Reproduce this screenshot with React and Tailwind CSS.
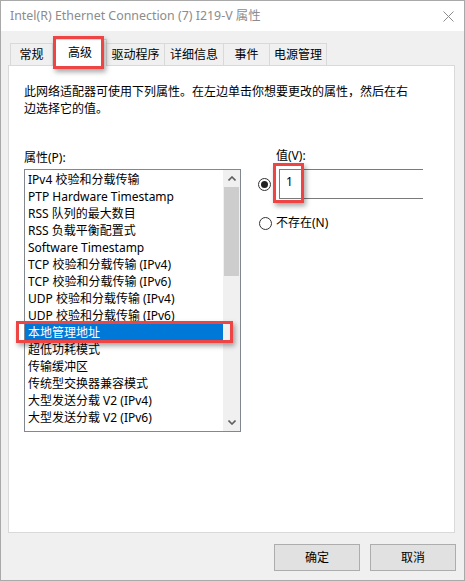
import React from "react";

const font = {
  fontFamily: '"Segoe UI", "Noto Sans", "Noto Sans CJK SC", sans-serif',
};

const tabs = [
  { label: "常规", w: "w-[43px]" },
  { label: "高级", w: "w-[54px]", active: true },
  { label: "驱动程序", w: "w-[59px]" },
  { label: "详细信息", w: "w-[60px]" },
  { label: "事件", w: "w-[47px]" },
  { label: "电源管理", w: "w-[58px]" },
];

const items = [
  "IPv4 校验和分载传输",
  "PTP Hardware Timestamp",
  "RSS 队列的最大数目",
  "RSS 负载平衡配置式",
  "Software Timestamp",
  "TCP 校验和分载传输 (IPv4)",
  "TCP 校验和分载传输 (IPv6)",
  "UDP 校验和分载传输 (IPv4)",
  "UDP 校验和分载传输 (IPv6)",
  "本地管理地址",
  "超低功耗模式",
  "传输缓冲区",
  "传统型交换器兼容模式",
  "大型发送分载 V2 (IPv4)",
  "大型发送分载 V2 (IPv6)",
];

const Radio = ({ checked }) => (
  <div className="w-[13px] h-[13px] rounded-full border border-[#333] bg-white flex items-center justify-center">
    {checked && <div className="w-[7px] h-[7px] rounded-full bg-[#222]" />}
  </div>
);

const RedBox = ({ className }) => (
  <div
    className={`absolute border-[3px] border-[#ee4444] shadow-[2px_3px_5px_rgba(0,0,0,0.35)] pointer-events-none ${className}`}
  />
);

export default function App() {
  return (
    <div
      className="relative w-[465px] h-[581px] border border-[#a9a9a9] bg-[#f0f0f0] flex flex-col text-[12px] text-black"
      style={font}
    >
      {/* Title bar */}
      <div className="h-[30px] bg-white flex items-center justify-between pl-[9px] pr-[9px]">
        <span className="text-[12.4px] text-[#8c8c8c]">
          Intel(R) Ethernet Connection (7) I219-V 属性
        </span>
        <svg width="11" height="11" viewBox="0 0 11 11" className="mr-[1px]">
          <path d="M0.5 0.5 L10.5 10.5 M10.5 0.5 L0.5 10.5" stroke="#8c8c8c" strokeWidth="1" />
        </svg>
      </div>

      {/* Tabs */}
      <div className="mt-[7px] pl-[9px] flex items-end h-[27px] relative z-10">
        {tabs.map((t) =>
          t.active ? (
            <div
              key={t.label}
              className={`${t.w} h-[27px] -mb-[1px] bg-white border border-b-0 border-[#d9d9d9] flex items-start justify-center pt-[4px]`}
            >
              {t.label}
            </div>
          ) : (
            <div
              key={t.label}
              className={`${t.w} h-[22px] bg-[#f0f0f0] border border-b-0 border-[#d9d9d9] -ml-[1px] first:ml-0 flex items-center justify-center`}
            >
              {t.label}
            </div>
          )
        )}
      </div>

      {/* Tab panel */}
      <div className="ml-[7px] w-[447px] h-[468px] bg-white border border-[#d9d9d9] px-[15px] pt-[17px]">
        <p className="leading-[17px]">
          此网络适配器可使用下列属性。在左边单击你想要更改的属性，然后在右
          <br />
          边选择它的值。
        </p>

        <div className="mt-[32px] flex">
          {/* Left column */}
          <div className="w-[217px]">
            <div className="leading-[17px] mb-[3px]">属性(P):</div>
            <div className="h-[263px] border border-[#828790] flex">
              <div className="flex-1 pt-[1px]">
                {items.map((it) => {
                  const sel = it === "本地管理地址";
                  return (
                    <div
                      key={it}
                      className={`h-[17px] leading-[17px] pl-[3px] whitespace-nowrap ${
                        sel ? "bg-[#0078d7] text-white" : ""
                      }`}
                    >
                      {it}
                    </div>
                  );
                })}
              </div>
              <div className="w-[17px] bg-[#f0f0f0] flex flex-col">
                <div className="h-[17px] flex items-center justify-center">
                  <svg width="8" height="5" viewBox="0 0 8 5">
                    <path d="M0.5 4.5 L4 1 L7.5 4.5" stroke="#606060" strokeWidth="1.6" fill="none" />
                  </svg>
                </div>
                <div className="mx-[1px] h-[89px] bg-[#cdcdcd]" />
                <div className="flex-1" />
                <div className="h-[17px] flex items-center justify-center">
                  <svg width="8" height="5" viewBox="0 0 8 5">
                    <path d="M0.5 0.5 L4 4 L7.5 0.5" stroke="#606060" strokeWidth="1.6" fill="none" />
                  </svg>
                </div>
              </div>
            </div>
          </div>

          {/* Right column */}
          <div className="ml-[17px] flex-1">
            <div className="ml-[18px] leading-[17px] mb-[5px] -mt-[2px]">值(V):</div>
            <div className="flex items-center">
              <Radio checked />
              <div className="ml-[8px] w-[144px] h-[30px] border-t border-l border-b border-[#7a7a7a] pl-[6px] pt-[3px] leading-[17px]">
                1
              </div>
            </div>
            <div className="flex items-center mt-[15px] ml-[1px]">
              <Radio />
              <span className="ml-[4px]">不存在(N)</span>
            </div>
          </div>
        </div>
      </div>

      {/* Buttons */}
      <div className="flex justify-end gap-[10px] pr-[8px] mt-[11px]">
        <button className="w-[86px] h-[27px] bg-[#e1e1e1] border border-[#adadad]">确定</button>
        <button className="w-[86px] h-[27px] bg-[#e1e1e1] border border-[#adadad]">取消</button>
      </div>

      {/* Red highlights */}
      <RedBox className="left-[52px] top-[35px] w-[51px] h-[33px] z-20" />
      <RedBox className="left-[15px] top-[320px] w-[217px] h-[22px] z-20" />
      <RedBox className="left-[272px] top-[162px] w-[31px] h-[40px] z-20" />
    </div>
  );
}
